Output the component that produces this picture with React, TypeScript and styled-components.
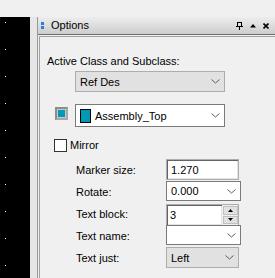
import React from 'react';
import styled, { createGlobalStyle } from 'styled-components';

const GlobalStyle = createGlobalStyle`
  html, body {
    margin: 0;
    padding: 0;
    background: #f0f0f0;
  }
  body {
    font-family: "Liberation Sans", Arial, sans-serif;
    font-size: 11px;
    color: #000;
  }
`;

const Screen = styled.div`
  width: 275px;
  height: 278px;
  display: flex;
  flex-direction: column;
  overflow: hidden;
  background: #f0f0f0;
`;

const TopStrip = styled.div`
  height: 17px;
  flex-shrink: 0;
  background: #f0f0f0;
`;

const Main = styled.div`
  flex: 1;
  display: flex;
  min-height: 0;
`;

const Canvas = styled.div`
  width: 30px;
  flex-shrink: 0;
  background: #000;
`;

const Gutter = styled.div`
  width: 7px;
  flex-shrink: 0;
  background: #e6e6e6;
`;

const Panel = styled.div`
  flex: 1;
  display: flex;
  flex-direction: column;
  border-left: 1px solid #9a9a9a;
  background: #f0f0f0;
  min-width: 0;
`;

const Header = styled.div`
  height: 17px;
  flex-shrink: 0;
  display: flex;
  align-items: center;
  background: linear-gradient(#ededed, #cdcdcd);
  border-bottom: 1px solid #6e6e6e;
  padding-left: 3px;
`;

const Grip = styled.div`
  width: 3px;
  display: flex;
  flex-direction: column;
  gap: 1px;
  margin-right: 7px;
  span {
    width: 3px;
    height: 3px;
    background: #2a7fd6;
  }
`;

const Title = styled.div`
  flex: 1;
  line-height: 13px;
`;

const HeaderIcons = styled.div`
  display: flex;
  align-items: center;
  gap: 7px;
  padding-right: 6px;
`;

const Frame = styled.div`
  flex: 1;
  margin: 1px 0 0 1px;
  border-left: 1px solid #a0a0a0;
  border-top: 1px solid #a0a0a0;
  display: flex;
  flex-direction: column;
  padding: 18px 0 0 7px;
`;

const Label = styled.div`
  line-height: 13px;
  white-space: nowrap;
`;

const Combo = styled.div<{ $w: number; $h: number; $flat?: boolean }>`
  width: ${p => p.$w}px;
  height: ${p => p.$h}px;
  box-sizing: border-box;
  display: flex;
  align-items: center;
  padding: 0 4px 0 4px;
  background: ${p => (p.$flat ? '#e1e1e1' : '#fff')};
  border: 1px solid ${p => (p.$flat ? '#adadad' : '#7a7a7a')};
  white-space: nowrap;
  flex-shrink: 0;
`;

const ComboText = styled.div`
  flex: 1;
  display: flex;
  align-items: center;
  gap: 4px;
  overflow: hidden;
`;

const ClassCombo = styled(Combo)`
  margin: 3px 0 0 28px;
`;

const SwatchRow = styled.div`
  display: flex;
  align-items: flex-start;
  margin-top: 12px;
  padding-left: 8px;
  gap: 7px;
`;

const SwatchButton = styled.div`
  width: 13px;
  height: 13px;
  box-sizing: border-box;
  margin-top: 3px;
  border: 2px solid #8c8c8c;
  border-right-color: #a8a8a8;
  border-bottom-color: #a8a8a8;
  padding: 1px 1px 1px 1px;
  background: #c8c8c8;
  div {
    width: 100%;
    height: 100%;
    background: #0099b8;
  }
`;

const Chip = styled.span`
  width: 11px;
  height: 14px;
  box-sizing: border-box;
  border: 1px solid #000;
  background: #0099b8;
  flex-shrink: 0;
`;

const CheckRow = styled.label`
  display: flex;
  align-items: center;
  gap: 3px;
  margin-top: 12px;
  padding-left: 7px;
  line-height: 13px;
`;

const CheckBox = styled.span`
  width: 13px;
  height: 13px;
  box-sizing: border-box;
  border: 1px solid #333;
  background: #fff;
`;

const Form = styled.div`
  display: grid;
  grid-template-columns: 90px auto;
  grid-auto-rows: 22px;
  margin-top: 7px;
  padding-left: 29px;
  align-items: center;
`;

const Control = styled.div`
  display: flex;
  align-items: flex-start;
  height: 22px;
`;

const TextInput = styled.div<{ $w: number; $h: number }>`
  width: ${p => p.$w}px;
  height: ${p => p.$h}px;
  box-sizing: border-box;
  border: 1px solid #adadad;
  box-shadow: inset 1px 1px #646464, inset -1px -1px #e3e3e3;
  background: #fff;
  padding: 0 4px;
  display: flex;
  align-items: center;
`;

const Spinner = styled.div`
  display: flex;
  width: 73px;
  height: 22px;
  box-sizing: border-box;
  border: 1px solid #adadad;
  background: #f0f0f0;
  margin-top: 1px;
`;

const SpinText = styled.div`
  flex: 1;
  box-shadow: inset 1px 1px #646464, inset -1px -1px #e3e3e3;
  background: #fff;
  padding: 0 3px;
  display: flex;
  align-items: center;
`;

const SpinButtons = styled.div`
  width: 15px;
  display: flex;
  flex-direction: column;
  gap: 1px;
  padding: 1px 0 1px 1px;
`;

const SpinButton = styled.div`
  flex: 1;
  background: #e1e1e1;
  border: 1px solid #c0c0c0;
  display: flex;
  align-items: center;
  justify-content: center;
`;

const Chevron = () => (
  <svg width="9" height="5" viewBox="0 0 9 5">
    <polyline points="0.5,0.5 4.5,4 8.5,0.5" fill="none" stroke="#606060" strokeWidth="1" />
  </svg>
);

const Tri = ({ down }: { down?: boolean }) => (
  <svg width="5" height="3" viewBox="0 0 5 3">
    <polygon points={down ? '0,0 5,0 2.5,3' : '2.5,0 5,3 0,3'} fill="#000" />
  </svg>
);

const GridDots = () => (
  <svg width="30" height="261">
    <defs>
      <pattern id="dots" width="27" height="27" patternUnits="userSpaceOnUse">
        <rect x="5" y="5" width="1" height="1" fill="#fff" />
      </pattern>
    </defs>
    <rect width="30" height="261" fill="url(#dots)" />
  </svg>
);

const App: React.FC = () => {
  return (
    <Screen>
      <GlobalStyle />
      <TopStrip />
      <Main>
        <Canvas>
          <GridDots />
        </Canvas>
        <Gutter />
        <Panel>
          <Header>
            <Grip>
              <span />
              <span />
            </Grip>
            <Title>Options</Title>
            <HeaderIcons>
              <svg width="7" height="8" viewBox="0 0 7 8">
                <rect x="1.5" y="0.5" width="4" height="4" fill="none" stroke="#000" />
                <rect x="0" y="4" width="7" height="1" fill="#000" />
                <rect x="3" y="5" width="1" height="3" fill="#000" />
              </svg>
              <svg width="6" height="4" viewBox="0 0 6 4">
                <polygon points="3,0 6,3.5 0,3.5" fill="#000" />
              </svg>
              <svg width="6" height="6" viewBox="0 0 6 6">
                <path d="M0.5 0.5 L5.5 5.5 M5.5 0.5 L0.5 5.5" stroke="#000" strokeWidth="1.6" />
              </svg>
            </HeaderIcons>
          </Header>
          <Frame>
            <Label>Active Class and Subclass:</Label>
            <ClassCombo $w={150} $h={21} $flat>
              <ComboText>Ref Des</ComboText>
              <Chevron />
            </ClassCombo>
            <SwatchRow>
              <SwatchButton>
                <div />
              </SwatchButton>
              <Combo $w={150} $h={23}>
                <ComboText>
                  <Chip />
                  Assembly_Top
                </ComboText>
                <Chevron />
              </Combo>
            </SwatchRow>
            <CheckRow>
              <CheckBox />
              Mirror
            </CheckRow>
            <Form>
              <Label>Marker size:</Label>
              <Control>
                <TextInput $w={73} $h={21}>1.270</TextInput>
              </Control>
              <Label>Rotate:</Label>
              <Control>
                <Combo $w={75} $h={20}>
                  <ComboText>0.000</ComboText>
                  <Chevron />
                </Combo>
              </Control>
              <Label>Text block:</Label>
              <Control>
                <Spinner>
                  <SpinText>3</SpinText>
                  <SpinButtons>
                    <SpinButton>
                      <Tri />
                    </SpinButton>
                    <SpinButton>
                      <Tri down />
                    </SpinButton>
                  </SpinButtons>
                </Spinner>
              </Control>
              <Label>Text name:</Label>
              <Control>
                <Combo $w={75} $h={20}>
                  <ComboText />
                  <Chevron />
                </Combo>
              </Control>
              <Label>Text just:</Label>
              <Control>
                <Combo $w={73} $h={21} $flat>
                  <ComboText>Left</ComboText>
                  <Chevron />
                </Combo>
              </Control>
            </Form>
          </Frame>
        </Panel>
      </Main>
    </Screen>
  );
};

export default App;
